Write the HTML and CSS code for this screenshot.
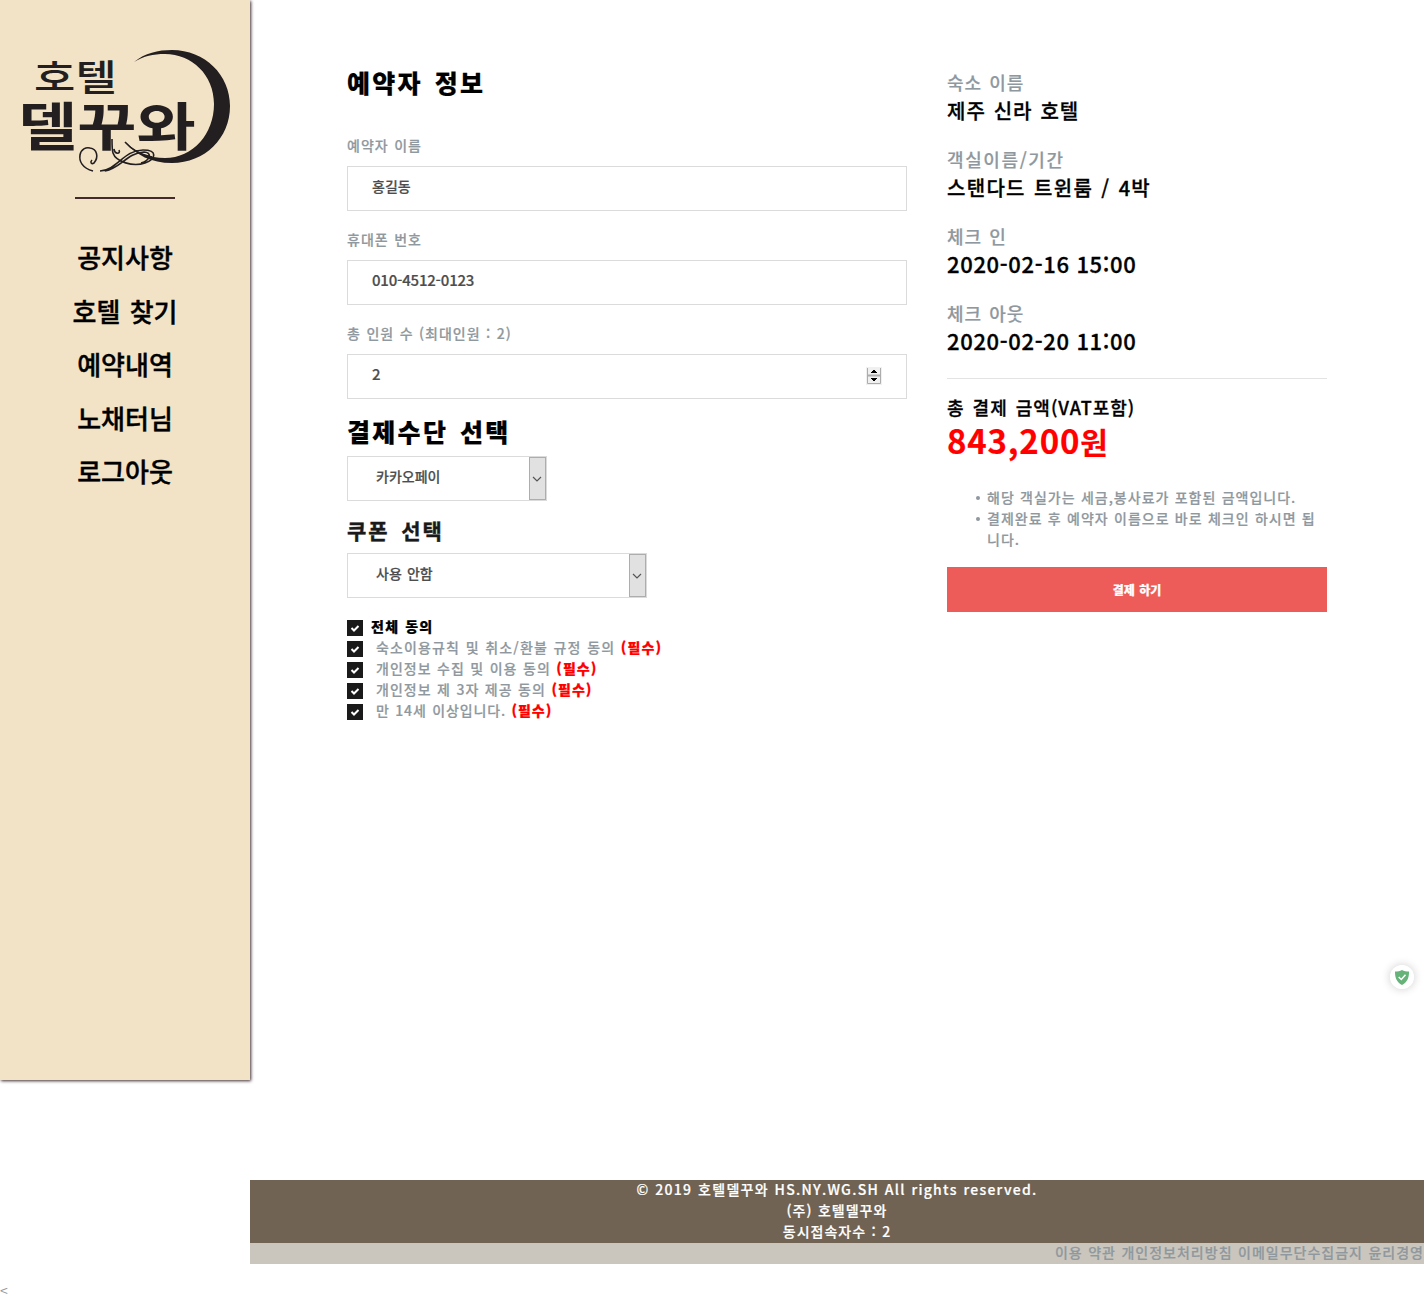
FILE: index.html
```html
<!DOCTYPE html>
<html lang="ko">
<head>
<meta charset="utf-8">
<title>호텔델꾸와 - 예약</title>
<link rel="stylesheet" href="styles.css">
</head>
<body>
<div class="layout">
  <aside class="sidebar">
    <svg class="logo" viewBox="19 46 212 128" role="img" aria-label="호텔 델꾸와">
      <path class="logo-fill" d="M134 62C145 53 158 50 172 50C205 50 230 75 230 106C230 138 205 163 172 163C151 163 136 155 125 142C137 153 149 158 165 158C193 158 214 134 214 104C214 75 192 54 165 54C153 54 144 56 134 62Z"/>
      <path class="logo-line" d="M93 171C82 168 79 161 80 155C81 149 86 147 90 148C97 149 99 157 94 163C91 165 90 162 92 160M100 171C117 170 124 150 143 150C158 150 156 159 145 163C133 167 116 162 113 153C112 150 112 147 112 139M105 171C121 168 127 153 144 152C152 152 151 160 141 163M119 150C121 154 115 155 114 149M125 142C132 150 142 155 152 157"/>
      <text class="logo-text logo-small" transform="translate(34 91) scale(1.25 1)">호텔</text>
      <text class="logo-text logo-large" transform="translate(18 146) scale(1.24 1)">델꾸와</text>
    </svg>
    <div class="rule"></div>
    <nav class="menu">
      <a>공지사항</a>
      <a>호텔 찾기</a>
      <a>예약내역</a>
      <a>노채터님</a>
      <a>로그아웃</a>
    </nav>
  </aside>
  <div class="page">
    <main class="content">
      <form class="form">
        <h2 class="title title-first">예약자 정보</h2>
        <label class="label" for="name">예약자 이름</label>
        <input class="field" id="name" value="홍길동">
        <label class="label" for="phone">휴대폰 번호</label>
        <input class="field field-phone" id="phone" value="010-4512-0123">
        <label class="label" for="count">총 인원 수 (최대인원 : 2)</label>
        <div class="field number">
          <input class="number-input" id="count" value="2">
          <svg class="spinner" viewBox="0 0 16 18">
            <rect width="16" height="18" fill="#f0f0f0"/>
            <path d="M1.500 1V16.500H14.500V1" fill="none" stroke="#adadad"/>
            <path d="M1 8.500H15" stroke="#adadad" stroke-width="2"/>
            <path d="M5 6H11V5H10V4H9V3H7V4H6V5H5ZM5 11H11V12H10V13H9V14H7V13H6V12H5Z" fill="#000"/>
          </svg>
        </div>
        <h2 class="title">결제수단 선택</h2>
        <div class="select">
          <select class="select-input"><option>카카오페이</option></select>
          <svg class="select-arrow" viewBox="0 0 17 43"><rect x=".5" y=".5" width="16" height="42" fill="#e1e1e1" stroke="#adadad"/><path d="M4 20L8 24L12 20" fill="none" stroke="#555" stroke-width="1.200"/></svg>
        </div>
        <h3 class="subtitle">쿠폰 선택</h3>
        <div class="select select-wide">
          <select class="select-input"><option>사용 안함</option></select>
          <svg class="select-arrow" viewBox="0 0 17 43"><rect x=".5" y=".5" width="16" height="42" fill="#e1e1e1" stroke="#adadad"/><path d="M4 20L8 24L12 20" fill="none" stroke="#555" stroke-width="1.200"/></svg>
        </div>
        <div class="terms">
          <div class="term term-all"><svg class="check" viewBox="0 0 16 16"><path d="M4.500 8L7 10.500L11.500 6"/></svg><span>전체 동의</span></div>
          <div class="term term-rules"><svg class="check" viewBox="0 0 16 16"><path d="M4.500 8L7 10.500L11.500 6"/></svg><span>숙소이용규칙 및 취소/환불 규정 동의 <b>(필수)</b></span></div>
          <div class="term"><svg class="check" viewBox="0 0 16 16"><path d="M4.500 8L7 10.500L11.500 6"/></svg><span>개인정보 수집 및 이용 동의 <b>(필수)</b></span></div>
          <div class="term"><svg class="check" viewBox="0 0 16 16"><path d="M4.500 8L7 10.500L11.500 6"/></svg><span>개인정보 제 3자 제공 동의 <b>(필수)</b></span></div>
          <div class="term term-age"><svg class="check" viewBox="0 0 16 16"><path d="M4.500 8L7 10.500L11.500 6"/></svg><span>만 14세 이상입니다. <b>(필수)</b></span></div>
        </div>
      </form>
      <section class="summary">
        <dl class="facts">
          <dt>숙소 이름</dt><dd>제주 신라 호텔</dd>
          <dt class="spread">객실이름/기간</dt><dd class="room">스탠다드 트윈룸 / 4박</dd>
          <dt>체크 인</dt><dd class="date">2020-02-16 15:00</dd>
          <dt>체크 아웃</dt><dd class="date">2020-02-20 11:00</dd>
        </dl>
        <div class="total-label">총 결제 금액(VAT포함)</div>
        <div class="price">843,200<small>원</small></div>
        <ul class="notes">
          <li>해당 객실가는 세금,봉사료가 포함된 금액입니다.</li>
          <li>결제완료 후 예약자 이름으로 바로 체크인 하시면 됩니다.</li>
        </ul>
        <button class="pay" type="button">결제 하기</button>
      </section>
    </main>
    <footer class="footer">
      <p class="copyright">© 2019 호텔델꾸와 HS.NY.WG.SH All rights reserved.</p>
      <p>(주) 호텔델꾸와</p>
      <p>동시접속자수 : 2</p>
    </footer>
    <div class="policies">이용 약관 개인정보처리방침 이메일무단수집금지 윤리경영</div>
  </div>
</div>
<div class="tail">&lt;</div>
<svg class="guard" viewBox="0 0 24 24"><circle cx="12" cy="12" r="12" fill="#fff"/><path d="M12 5C14 6 16.500 6.500 19 6.500C19.200 13 17 17.500 12 20C7 17.500 4.800 13 5 6.500C7.500 6.500 10 6 12 5Z" fill="#67b279"/><path d="M8.700 12L11.300 14.500L15.500 9.800" fill="none" stroke="#fff" stroke-width="1.500"/></svg>
</body>
</html>
```
FILE: styles.css
```css
* { box-sizing: border-box; }
body {
  margin: 0;
  background: #fff;
  color: #8f989e;
  font: 500 14px/21px "Noto Sans CJK KR", sans-serif;
  letter-spacing: 1px;
  word-spacing: .6px;
  -webkit-text-stroke: .2px;
}
h2, h3, p, dl, dd, ul { margin: 0; }
.layout { display: flex; height: 1264px; align-items: flex-start; }
.sidebar {
  display: flex;
  flex-direction: column;
  align-items: center;
  width: 250px;
  height: 1080px;
  padding-top: 46px;
  background: #f2e3c6;
  box-shadow: 1px 1px 3px 0 #3e2a2f;
}
.logo { width: 212px; height: 128px; }
.logo-fill { fill: #231e1f; }
.logo-line { fill: none; stroke: #231e1f; stroke-width: 1.6; }
.logo-text { fill: #231e1f; letter-spacing: 0; -webkit-text-stroke: 0; }
.logo-small { font-size: 36px; font-weight: 500; -webkit-text-stroke: .5px #231e1f; }
.logo-large { font-size: 52px; font-weight: 700; }
.rule { width: 100px; height: 2px; margin: 23px 0 33px; background: #432b2b; }
.menu { display: flex; flex-direction: column; align-items: center; }
.menu a {
  height: 53.5px;
  color: #000;
  font-size: 26px;
  line-height: 50px;
  letter-spacing: 0;
  word-spacing: 2px;
  -webkit-text-stroke: .4px;
}
.page { display: flex; flex: 1; flex-direction: column; height: 1264px; }
.content { display: flex; flex: 1; gap: 40px; padding: 63px 97px 0; }
.form { display: flex; flex-direction: column; width: 560px; }
.title {
  height: 26px;
  margin: 19px 0 12px;
  color: #000;
  font-size: 25px;
  font-weight: 900;
  line-height: 26px;
  letter-spacing: 2.3px;
  word-spacing: 2.5px;
}
.title-first { height: 40px; margin: 0 0 32px; line-height: 38px; }
.label { height: 21px; margin-bottom: 10px; }
.field {
  width: 560px;
  height: 45px;
  margin: 0 0 18px;
  padding: 0 24px 5px;
  border: 1px solid #dbdbdb;
  background: #fff;
  color: #4d4d4d;
  font: inherit;
  letter-spacing: 0;
}
.field-phone { padding-bottom: 6px; font-size: 15px; letter-spacing: -.2px; }
.number { display: flex; align-items: center; justify-content: space-between; margin: 0; padding: 0 24px; }
.number-input { width: 300px; padding: 0 0 6px; border: 0; outline: 0; color: inherit; font: inherit; font-size: 15px; }
.spinner { width: 16px; height: 18px; margin-bottom: 1px; }
.select { display: flex; width: 200px; height: 45px; border: 1px solid #dbdbdb; }
.select-wide { width: 300px; }
.select-input {
  flex: 1;
  appearance: none;
  padding: 0 0 4px 28px;
  border: 0;
  background: #fff;
  color: #4d4d4d;
  font: inherit;
  letter-spacing: 0;
  word-spacing: 1.3px;
}
.select-arrow { width: 17px; height: 43px; }
.subtitle {
  margin: 17px 0 11px;
  color: #1a1a1a;
  font-size: 21px;
  font-weight: 700;
  line-height: 24px;
  letter-spacing: 1.9px;
  word-spacing: 4px;
  -webkit-text-stroke: .4px;
}
.terms { margin-top: 18px; }
.term { display: flex; align-items: center; gap: 13px; height: 21px; }
.term-all { gap: 8px; color: #000; font-weight: 900; letter-spacing: 1.3px; }
.term-rules { letter-spacing: 1.12px; }
.term-age { letter-spacing: .9px; }
.term b { color: #f00; font-weight: 900; }
.check { width: 16px; height: 16px; margin-top: 3px; background: #1a1a1a; }
.check path { fill: none; stroke: #fff; stroke-width: 2; }
.summary { width: 380px; padding-top: 5px; }
.facts { height: 311px; border-bottom: 1px solid #e3e3e3; }
.facts dt { font-size: 18px; line-height: 28px; letter-spacing: .9px; word-spacing: 1.5px; }
.facts .spread { letter-spacing: 1.6px; }
.facts dd {
  margin-bottom: 19px;
  color: #000;
  font-size: 20px;
  line-height: 30px;
  word-spacing: 1.3px;
  -webkit-text-stroke: .3px;
}
.facts .room { letter-spacing: 1.3px; }
.facts .date { margin-bottom: 23px; font-size: 22px; line-height: 26px; letter-spacing: .65px; word-spacing: 0; }
.total-label { margin-top: 14px; color: #000; font-size: 18px; line-height: 28px; letter-spacing: 1px; word-spacing: 2px; -webkit-text-stroke: .3px; }
.price { color: #f00; font-size: 33px; font-weight: 700; line-height: 38px; letter-spacing: .8px; }
.price small { font-size: 30px; }
.notes { margin-top: 27px; padding-left: 40px; list-style: none; }
.notes li { letter-spacing: 1px; word-spacing: .4px; }
.notes li::before {
  content: "";
  float: left;
  width: 4px;
  height: 4px;
  margin: 9px 0 0 -11px;
  border-radius: 50%;
  background: currentColor;
}
.pay {
  width: 380px;
  height: 45px;
  margin-top: 17px;
  border: 0;
  background: #ee5c5a;
  color: #fff;
  font: 900 12px/21px "Noto Sans CJK KR", sans-serif;
  word-spacing: 1px;
}
.footer { background: #706353; color: #fff; text-align: center; }
.footer p { height: 21px; line-height: 19px; }
.footer .copyright { letter-spacing: 1.26px; }
.policies { height: 21px; line-height: 19px; background: #cac6bd; text-align: right; }
.tail { padding-top: 16px; font-weight: 400; -webkit-text-stroke: 0; }
.guard {
  position: absolute;
  left: 1390px;
  top: 965px;
  width: 24px;
  height: 24px;
  border-radius: 50%;
  box-shadow: 0 0 10px rgba(0, 0, 0, .2);
}
```
